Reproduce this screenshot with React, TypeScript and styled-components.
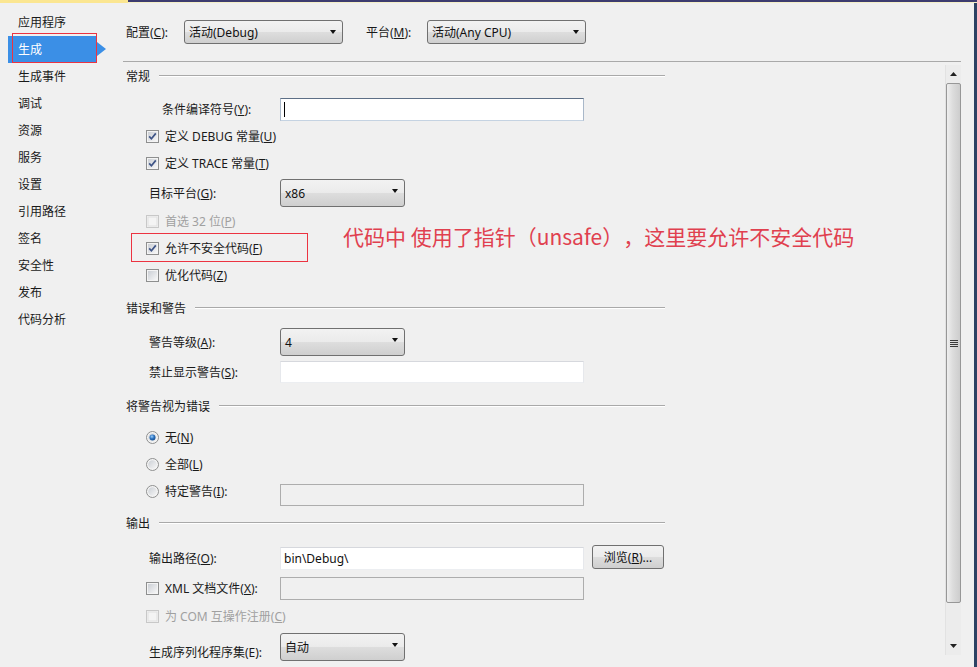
import React from 'react';
import styled, { createGlobalStyle, css } from 'styled-components';

const GlobalStyle = createGlobalStyle`
  html, body {
    margin: 0;
    padding: 0;
    background: #f0f0f0;
  }
  * {
    box-sizing: border-box;
  }
  body {
    font-family: "Noto Sans", "Noto Sans CJK SC", sans-serif;
    font-size: 12px;
    color: #1a1a1a;
  }
`;

const navItems = ['应用程序', '生成', '生成事件', '调试', '资源', '服务', '设置', '引用路径', '签名', '安全性', '发布', '代码分析'];

export default function App() {
  return (
    <>
      <GlobalStyle />
      <Frame>
        <TopStrip>
          <YellowSeg />
          <NavySeg />
        </TopStrip>
        <Body>
          <Sidebar>
            {navItems.map((item) => (
              <NavItem key={item} $active={item === '生成'}>
                {item}
                {item === '生成' && <RedMark $left={4} $top={-3} $w={85} $hgt={30} />}
              </NavItem>
            ))}
          </Sidebar>

          <Main>
            <Toolbar>
              <ToolLabel $w={58}>
                配置(<U>C</U>):
              </ToolLabel>
              <Select $w={159}>活动(Debug)</Select>
              <ToolLabel $w={61} $gap={23}>
                平台(<U>M</U>):
              </ToolLabel>
              <Select $w={159}>活动(Any CPU)</Select>
            </Toolbar>

            <ScrollArea>
              <Content>
                {/* 常规 */}
                <Row $h={33}>
                  <SectionHeader>
                    <span>常规</span>
                    <SectionLine />
                  </SectionHeader>
                </Row>
                <Row $h={27} $indent>
                  <Label $pad={16}>
                    条件编译符号(<U>Y</U>):
                  </Label>
                  <TextBox $focused>
                    <Caret />
                  </TextBox>
                </Row>
                <Row $h={27} $indent>
                  <CheckItem checked>
                    定义 DEBUG 常量(<U>U</U>)
                  </CheckItem>
                </Row>
                <Row $h={30} $indent>
                  <CheckItem checked>
                    定义 TRACE 常量(<U>T</U>)
                  </CheckItem>
                </Row>
                <Row $h={28} $indent>
                  <Label>
                    目标平台(<U>G</U>):
                  </Label>
                  <Select $w={125}>x86</Select>
                </Row>
                <Row $h={27} $indent>
                  <CheckItem disabled>
                    首选 32 位(<U>P</U>)
                  </CheckItem>
                </Row>
                <Row $h={27} $indent>
                  <CheckItem checked>
                    允许不安全代码(<U>F</U>)
                  </CheckItem>
                  <RedMark $left={5} $top={-1} $w={177} $hgt={29} />
                  <Annotation>代码中 使用了指针（unsafe），这里要允许不安全代码</Annotation>
                </Row>
                <Row $h={33} $indent>
                  <CheckItem>
                    优化代码(<U>Z</U>)
                  </CheckItem>
                </Row>

                {/* 错误和警告 */}
                <Row $h={34}>
                  <SectionHeader>
                    <span>错误和警告</span>
                    <SectionLine />
                  </SectionHeader>
                </Row>
                <Row $h={30} $indent>
                  <Label>
                    警告等级(<U>A</U>):
                  </Label>
                  <Select $w={125}>4</Select>
                </Row>
                <Row $h={34} $indent>
                  <Label>
                    禁止显示警告(<U>S</U>):
                  </Label>
                  <TextBox $h={22} />
                </Row>

                {/* 将警告视为错误 */}
                <Row $h={31}>
                  <SectionHeader>
                    <span>将警告视为错误</span>
                    <SectionLine />
                  </SectionHeader>
                </Row>
                <Row $h={27} $indent>
                  <RadioItem checked>
                    无(<U>N</U>)
                  </RadioItem>
                </Row>
                <Row $h={27} $indent>
                  <RadioItem>
                    全部(<U>L</U>)
                  </RadioItem>
                </Row>
                <Row $h={32} $indent>
                  <OptionCell>
                    <RadioItem>
                      特定警告(<U>I</U>):
                    </RadioItem>
                  </OptionCell>
                  <TextBox $disabled $h={22} $shift={4} />
                </Row>

                {/* 输出 */}
                <Row $h={35}>
                  <SectionHeader>
                    <span>输出</span>
                    <SectionLine />
                  </SectionHeader>
                </Row>
                <Row $h={30} $indent>
                  <Label>
                    输出路径(<U>O</U>):
                  </Label>
                  <TextBox>bin\Debug\</TextBox>
                  <Button>
                    浏览(<U>R</U>)...
                  </Button>
                </Row>
                <Row $h={28} $indent>
                  <OptionCell>
                    <CheckItem>
                      XML 文档文件(<U>X</U>):
                    </CheckItem>
                  </OptionCell>
                  <TextBox $disabled />
                </Row>
                <Row $h={36} $indent>
                  <CheckItem disabled>
                    为 COM 互操作注册(<U>C</U>)
                  </CheckItem>
                </Row>
                <Row $h={28} $indent>
                  <Label>生成序列化程序集(E):</Label>
                  <Select $w={125} $shift={-5}>自动</Select>
                </Row>
              </Content>

              <Scrollbar>
                <ScrollButton>
                  <svg width="7" height="4" viewBox="0 0 7 4">
                    <path d="M0 4 L3.5 0 L7 4 Z" fill="#222" />
                  </svg>
                </ScrollButton>
                <Thumb>
                  <Grip />
                </Thumb>
                <Track />
                <ScrollButton>
                  <svg width="7" height="4" viewBox="0 0 7 4">
                    <path d="M0 0 L7 0 L3.5 4 Z" fill="#222" />
                  </svg>
                </ScrollButton>
              </Scrollbar>
            </ScrollArea>
          </Main>
        </Body>
      </Frame>
    </>
  );
}

function CheckItem({ checked, disabled, children }: { checked?: boolean; disabled?: boolean; children: React.ReactNode }) {
  return (
    <OptionItem $disabled={disabled}>
      <svg width="13" height="13" viewBox="0 0 13 13">
        <defs>
          <linearGradient id="cbg" x1="0" y1="0" x2="1" y2="1">
            <stop offset="0" stopColor="#cbcfd5" />
            <stop offset="1" stopColor="#f7f7f7" />
          </linearGradient>
        </defs>
        <rect x="0.5" y="0.5" width="12" height="12" fill="#f4f4f4" stroke={disabled ? '#c8c8c8' : '#8e8f8f'} />
        <rect x="2" y="2" width="9" height="9" fill={disabled ? '#f4f4f4' : 'url(#cbg)'} stroke={disabled ? '#e0e0e0' : 'none'} />
        {checked && <path d="M3.2 6.4 L5.4 8.8 L9.8 3.4" fill="none" stroke="#3e5486" strokeWidth="1.7" />}
      </svg>
      <span>{children}</span>
    </OptionItem>
  );
}

function RadioItem({ checked, children }: { checked?: boolean; children: React.ReactNode }) {
  return (
    <OptionItem>
      <svg width="13" height="13" viewBox="0 0 13 13">
        <defs>
          <linearGradient id="rbg" x1="0" y1="0" x2="1" y2="1">
            <stop offset="0" stopColor="#cbcfd5" />
            <stop offset="1" stopColor="#f7f7f7" />
          </linearGradient>
          <radialGradient id="rdot" cx="0.4" cy="0.35" r="0.7">
            <stop offset="0" stopColor="#9fd3ff" />
            <stop offset="0.5" stopColor="#2e74c0" />
            <stop offset="1" stopColor="#124a8c" />
          </radialGradient>
        </defs>
        <circle cx="6.5" cy="6.5" r="6" fill="#f4f4f4" stroke="#8e8f8f" />
        <circle cx="6.5" cy="6.5" r="4.3" fill="url(#rbg)" />
        {checked && <circle cx="6.5" cy="6.5" r="3" fill="url(#rdot)" />}
      </svg>
      <span>{children}</span>
    </OptionItem>
  );
}

const Frame = styled.div`
  position: relative;
  width: 977px;
  height: 667px;
  overflow: hidden;
  display: flex;
  flex-direction: column;
  background: #f0f0f0;
`;

const TopStrip = styled.div`
  display: flex;
  height: 3px;
  flex-shrink: 0;
`;

const YellowSeg = styled.div`
  width: 128px;
  background: #fbe691;
`;

const NavySeg = styled.div`
  flex: 1;
  background: #3d3c70;
  border-bottom: 1px solid #f4efc8;
`;

const Body = styled.div`
  flex: 1;
  display: flex;
  border-right: 3px solid #2c4264;
  min-height: 0;
`;

const Sidebar = styled.div`
  width: 115px;
  flex-shrink: 0;
  padding-top: 6px;
  display: flex;
  flex-direction: column;
`;

const NavItem = styled.div<{ $active?: boolean }>`
  position: relative;
  height: 27px;
  line-height: 27px;
  padding-left: 18px;
  white-space: nowrap;
  color: #1a1a1a;

  ${(p) =>
    p.$active &&
    css`
      margin-left: 8px;
      width: 89px;
      padding-left: 10px;
      background: #3b8fe6;
      color: #fff;

      &::after {
        content: '';
        position: absolute;
        right: -9px;
        top: 6px;
        border-left: 9px solid #3b8fe6;
        border-top: 7px solid transparent;
        border-bottom: 7px solid transparent;
      }
    `}
`;

/* red annotation rectangle drawn over the screenshot */
const RedMark = styled.span<{ $left: number; $top: number; $w: number; $hgt: number }>`
  position: absolute;
  display: block;
  left: ${(p) => p.$left}px;
  top: ${(p) => p.$top}px;
  width: ${(p) => p.$w}px;
  height: ${(p) => p.$hgt}px;
  min-height: 0 !important;
  background: transparent;
  box-shadow: inset 0 0 0 1px #ec3341;
  pointer-events: none;
`;

const Main = styled.div`
  flex: 1;
  display: flex;
  flex-direction: column;
  min-width: 0;
`;

const Toolbar = styled.div`
  height: 59px;
  flex-shrink: 0;
  margin: 0 13px 0 8px;
  padding-left: 3px;
  display: flex;
  align-items: center;
  border-bottom: 1px solid #a9a9a9;
`;

const ToolLabel = styled.div<{ $w: number; $gap?: number }>`
  width: ${(p) => p.$w}px;
  margin-left: ${(p) => p.$gap ?? 0}px;
  flex-shrink: 0;
`;

const U = styled.span`
  text-decoration: underline;
`;

const Select = styled.div<{ $w: number; $shift?: number }>`
  position: relative;
  width: ${(p) => p.$w}px;
  height: 24px;
  flex-shrink: 0;
  margin-top: ${(p) => p.$shift ?? 0}px;
  padding-left: 4px;
  display: flex;
  align-items: center;
  border: 1px solid #707070;
  border-radius: 3px;
  background: linear-gradient(#f2f2f2 0%, #ebebeb 48%, #dddddd 52%, #cfcfcf 100%);
  color: #111;

  &::after {
    content: '';
    position: absolute;
    right: 6px;
    top: 9px;
    border-top: 4px solid #111;
    border-left: 3.5px solid transparent;
    border-right: 3.5px solid transparent;
  }
`;

const ScrollArea = styled.div`
  flex: 1;
  display: flex;
  min-height: 0;
`;

const Content = styled.div`
  flex: 1;
  padding-left: 11px;
  display: flex;
  flex-direction: column;
`;

const Row = styled.div<{ $h: number; $indent?: boolean }>`
  position: relative;
  height: ${(p) => p.$h}px;
  flex-shrink: 0;
  padding-left: ${(p) => (p.$indent ? 20 : 0)}px;
  display: flex;
  align-items: flex-start;

  & > * {
    min-height: 28px;
  }
`;

const SectionHeader = styled.div`
  width: 539px;
  height: 28px;
  display: flex;
  align-items: center;
  white-space: nowrap;
`;

const SectionLine = styled.div`
  flex: 1;
  margin-left: 9px;
  border-top: 1px solid #a9a9a9;
  border-bottom: 1px solid #ffffff;
`;

const Label = styled.div<{ $pad?: number }>`
  width: 134px;
  flex-shrink: 0;
  padding-left: ${(p) => p.$pad ?? 3}px;
  display: flex;
  align-items: center;
  white-space: nowrap;
`;

const OptionCell = styled.div`
  width: 134px;
  flex-shrink: 0;
  display: flex;
  align-items: center;
`;

const OptionItem = styled.div<{ $disabled?: boolean }>`
  display: flex;
  align-items: center;
  gap: 6px;
  height: 28px;
  white-space: nowrap;
  color: ${(p) => (p.$disabled ? '#a0a0a0' : '#1a1a1a')};

  svg {
    flex-shrink: 0;
  }
`;

const TextBox = styled.div<{ $focused?: boolean; $disabled?: boolean; $h?: number; $shift?: number }>`
  width: 304px;
  height: ${(p) => p.$h ?? 23}px;
  min-height: 0 !important;
  flex-shrink: 0;
  margin-top: ${(p) => (28 - (p.$h ?? 23)) / 2 + (p.$shift ?? 0)}px;
  padding-left: 3px;
  display: flex;
  align-items: center;
  background: ${(p) => (p.$disabled ? '#f0f0f0' : '#ffffff')};
  border: 1px solid;
  border-color: ${(p) =>
    p.$focused ? '#5d6f86 #a9b8c9 #c5d3e2 #a9b8c9' : p.$disabled ? '#adadad' : '#d6d8dd #e6e8ec #eceef1 #e6e8ec'};
  color: #111;
`;

const Caret = styled.span`
  width: 1px;
  height: 15px;
  background: #000;
`;

const Button = styled.div`
  width: 72px;
  height: 24px;
  min-height: 0 !important;
  margin-top: 1px;
  margin-left: 8px;
  flex-shrink: 0;
  display: flex;
  align-items: center;
  justify-content: center;
  border: 1px solid #707070;
  border-radius: 3px;
  background: linear-gradient(#f2f2f2 0%, #ebebeb 48%, #dddddd 52%, #cfcfcf 100%);
  color: #111;
`;

const Annotation = styled.div`
  position: absolute;
  left: 217px;
  top: -12px;
  line-height: 28px;
  font-size: 21px;
  font-family: "Noto Sans CJK SC", sans-serif;
  text-spacing-trim: space-all;
  color: #e0404f;
  white-space: nowrap;
`;

const Scrollbar = styled.div`
  width: 16px;
  flex-shrink: 0;
  margin: 3px 13px 12px 0;
  display: flex;
  flex-direction: column;
  background: #ececec;
  border-left: 1px solid #e2e2e2;
`;

const ScrollButton = styled.div`
  height: 18px;
  flex-shrink: 0;
  display: flex;
  align-items: center;
  justify-content: center;
`;

const Thumb = styled.div`
  height: 520px;
  flex-shrink: 0;
  display: flex;
  align-items: center;
  justify-content: center;
  border: 1px solid #979797;
  border-radius: 2px;
  background: linear-gradient(to right, #efefef 0%, #dcdcdc 45%, #cdcdcd 100%);
`;

const Grip = styled.div`
  width: 8px;
  height: 7px;
  background: repeating-linear-gradient(#3a3a3a 0 1px, transparent 1px 2px);
`;

const Track = styled.div`
  flex: 1;
`;
